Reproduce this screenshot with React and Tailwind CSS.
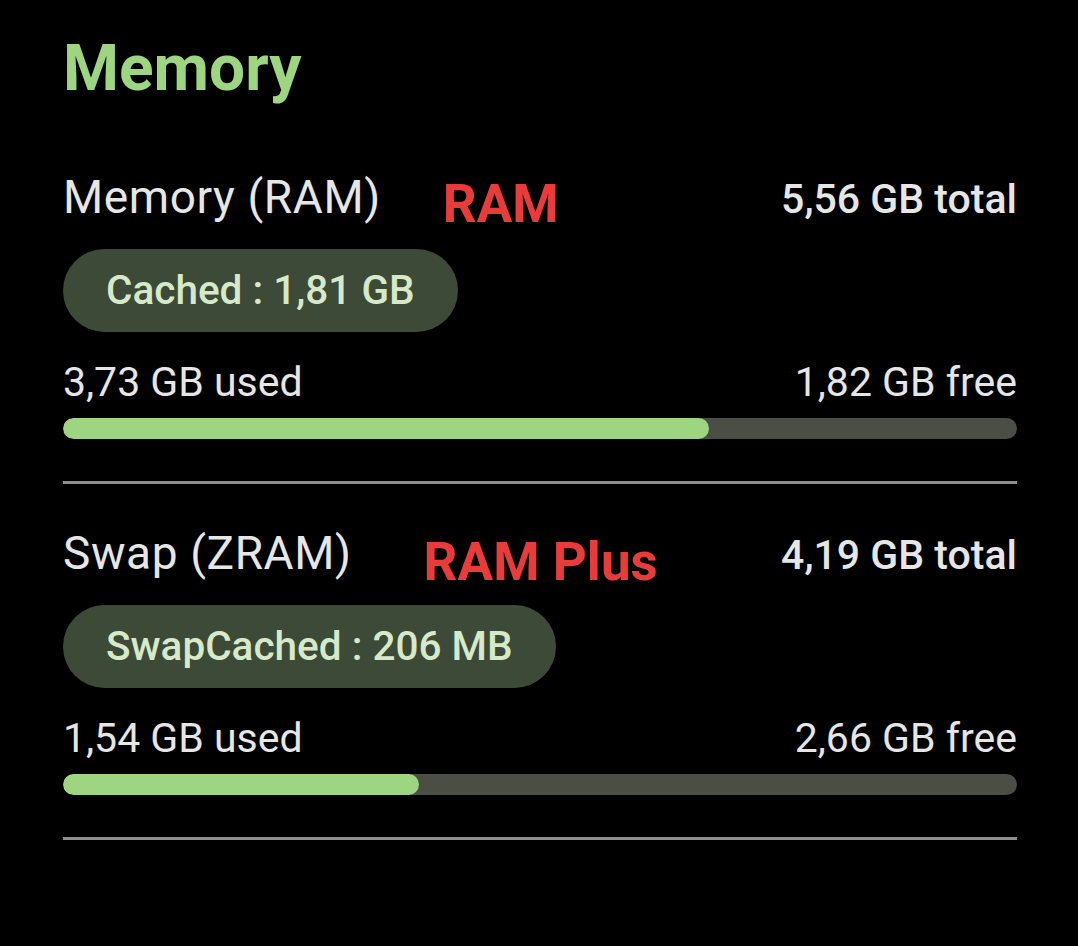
import React from "react";

function Section({ label, annot, annotMl, annotDy, total, pill, used, free, pct }) {
  return (
    <div>
      <div className="flex items-baseline leading-none">
        <span className="text-[46px] tracking-[0.6px] text-[#e6e6e6] font-normal">{label}</span>
        <span className={`text-[53px] font-bold text-[#ea3b3b] ${annotMl} ${annotDy}`}>{annot}</span>
        <span className="ml-auto text-[41px] font-medium text-[#e6e6e6]">{total}</span>
      </div>
      <div className="mt-[27px] flex">
        <div className="h-[83px] inline-flex items-center rounded-full bg-[#3d4a37] px-[43px] text-[40.5px] font-medium text-[#d6e9c9] leading-none">
          {pill}
        </div>
      </div>
      <div className="mt-[30px] flex justify-between leading-none text-[41px] text-[#e6e6e6]">
        <span>{used}</span>
        <span>{free}</span>
      </div>
      <div className="mt-[15px] h-[21px] rounded-full bg-[#4a4e45] overflow-hidden">
        <div className="h-full rounded-full bg-[#9ed580]" style={{ width: pct }} />
      </div>
      <div className="mt-[42px] h-[3px] bg-[#8e8e8e]" />
    </div>
  );
}

export default function App() {
  return (
    <div
      className="w-[1078px] h-[946px] bg-black pl-[63px] pr-[61px] pt-[37px]"
      style={{ fontFamily: "Roboto, 'Noto Sans', sans-serif" }}
    >
      <h1 className="text-[64px] leading-none font-bold text-[#9ed580]">Memory</h1>
      <div className="mt-[68px]">
        <Section
          label="Memory (RAM)"
          annot="RAM"
          annotMl="ml-[62px]"
          annotDy="translate-y-[9px]"
          total="5,56 GB total"
          pill="Cached : 1,81 GB"
          used="3,73 GB used"
          free="1,82 GB free"
          pct="67.7%"
        />
      </div>
      <div className="mt-[41px]">
        <Section
          label="Swap (ZRAM)"
          annot="RAM Plus"
          annotMl="ml-[72px]"
          annotDy="translate-y-[11px]"
          total="4,19 GB total"
          pill="SwapCached : 206 MB"
          used="1,54 GB used"
          free="2,66 GB free"
          pct="37.3%"
        />
      </div>
    </div>
  );
}
